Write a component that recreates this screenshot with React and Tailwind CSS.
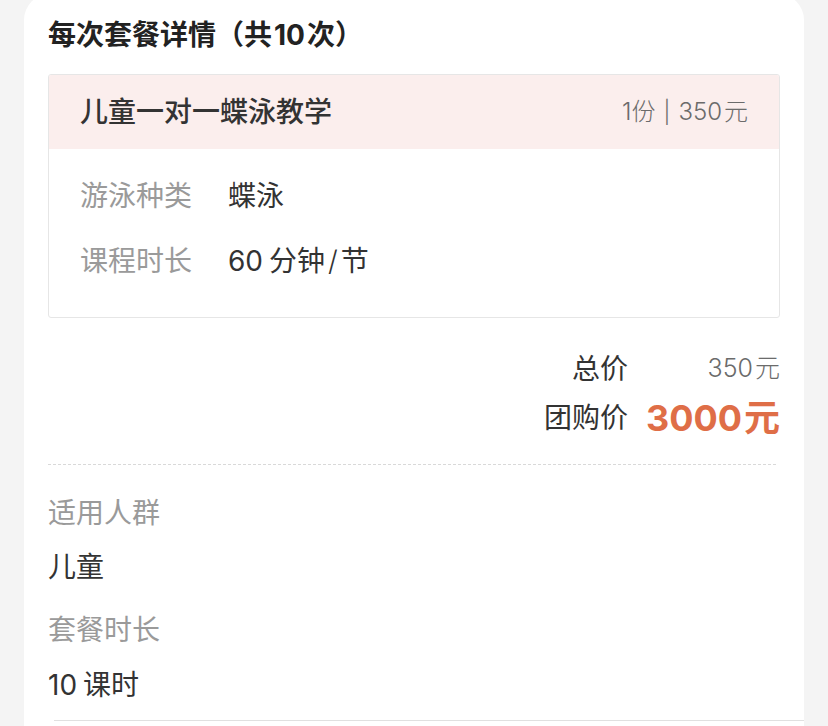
export default function App() {
  const specs = [
    { label: '游泳种类', value: '蝶泳' },
    {
      label: '课程时长',
      value: (
        <>
          60<span className="ml-[6px]">分钟</span>
          <span className="mx-[3px] font-light">/</span>节
        </>
      ),
    },
  ]

  return (
    <div
      className="h-[726px] overflow-hidden bg-[#f4f4f4] px-[24px]"
      style={{ fontFamily: 'Inter, "Noto Sans CJK SC", sans-serif' }}
    >
      <div className="-mt-[6px] min-h-[760px] rounded-t-[26px] bg-white px-[24px] pt-[21px]">
        <h2 className="text-[28px] font-bold leading-[40px] text-[#222]">
          每次套餐详情（共<span className="mx-[2px]">10</span>次）
        </h2>

        <div className="mt-[19px] overflow-hidden rounded-[3px] border border-[#e6e6e6]">
          <div className="flex h-[74px] items-center justify-between bg-[#fbeeed] px-[31px]">
            <span className="text-[28px] font-medium text-[#333]">儿童一对一蝶泳教学</span>
            <span className="text-[24px] font-light text-[#6b6b6b]">
              1份<span className="mx-[8px] text-[22px]">|</span>350<span className="ml-[2px]">元</span>
            </span>
          </div>
          <div className="flex flex-col gap-[25px] px-[31px] pb-[36px] pt-[27px]">
            {specs.map((s) => (
              <div key={s.label} className="flex text-[28px] leading-[40px]">
                <span className="w-[148px] text-[#9a9a9a]">{s.label}</span>
                <span className="text-[#333]">{s.value}</span>
              </div>
            ))}
          </div>
        </div>

        <div className="mt-[31px] flex flex-col items-end gap-[9px]">
          <div className="flex h-[40px] items-center">
            <span className="mr-[17px] text-[28px] text-[#333]">总价</span>
            <span className="min-w-[135px] whitespace-nowrap text-right text-[25px] font-light text-[#6b6b6b]">
              350<span className="ml-[2px]">元</span>
            </span>
          </div>
          <div className="flex h-[40px] items-center">
            <span className="mr-[17px] text-[28px] text-[#333]">团购价</span>
            <span className="min-w-[135px] whitespace-nowrap text-right text-[36px] font-bold text-[#df6e47]">
              3000<span className="ml-[2px]">元</span>
            </span>
          </div>
        </div>

        <div className="mr-[4px] mt-[26px] border-t border-dashed border-[#d9d9d9]" />

        <div className="flex flex-col text-[28px] leading-[40px]">
          <span className="mt-[28px] text-[#9a9a9a]">适用人群</span>
          <span className="mt-[14px] text-[#333]">儿童</span>
          <span className="mt-[23px] text-[#9a9a9a]">套餐时长</span>
          <span className="mt-[15px] text-[#333]">
            10<span className="ml-[6px]">课时</span>
          </span>
        </div>

        <div className="-mr-[24px] ml-[6px] mt-[15px] border-t border-[#e0e0e0]" />
      </div>
    </div>
  )
}
